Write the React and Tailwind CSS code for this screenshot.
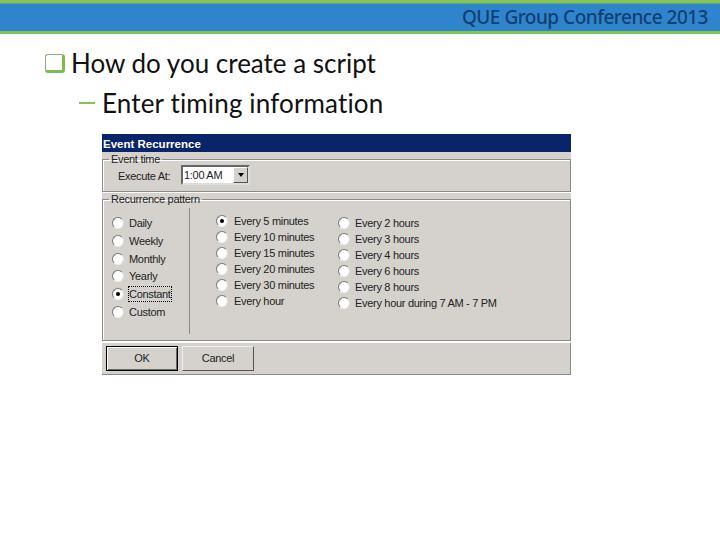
const SANS = "font-['Liberation_Sans',Arial,sans-serif]";
const LABEL = "text-[11px] text-[#222] tracking-[-0.3px] whitespace-nowrap";

const freq = ["Daily", "Weekly", "Monthly", "Yearly", "Constant", "Custom"];
const minutes = ["Every 5 minutes", "Every 10 minutes", "Every 15 minutes", "Every 20 minutes", "Every 30 minutes", "Every hour"];
const hours = ["Every 2 hours", "Every 3 hours", "Every 4 hours", "Every 6 hours", "Every 8 hours", "Every hour during 7 AM - 7 PM"];

function Radio({ checked }) {
  return (
    <span className="w-3 h-3 rounded-full bg-white border border-[#777] border-r-[#ddd] border-b-[#eee] flex items-center justify-center shrink-0">
      {checked && <span className="w-1 h-1 rounded-full bg-black" />}
    </span>
  );
}

function Option({ label, checked, focus, gap }) {
  return (
    <div className={`flex items-center h-[16px] ${gap}`}>
      <Radio checked={checked} />
      <span className={`${LABEL} leading-[14px] ${focus ? "outline outline-1 outline-dotted outline-black" : ""}`}>{label}</span>
    </div>
  );
}

function Dialog() {
  return (
    <div className={`w-[469px] ml-[102px] mt-[11px] bg-[#d5d2cd] ${SANS}`}>
      <div className="h-[18px] bg-[#0a246a] text-white text-[11.5px] font-bold leading-[20px] pl-[1px]">Event Recurrence</div>

      <fieldset className="mt-[1px] h-[39px] border border-[#8a8a8a] shadow-[inset_1px_1px_0_#fff,1px_1px_0_#fff]">
        <legend className={`ml-[6px] px-[2px] leading-[12px] ${LABEL}`}>Event time</legend>
        <div className="flex items-start pl-[15px]">
          <span className={`leading-[22px] w-[63px] ${LABEL}`}>Execute At:</span>
          <div className="w-[69px] h-[20px] bg-white border-2 border-[#666] border-r-[#ddd] border-b-[#ddd] flex justify-between">
            <span className={`leading-[16px] pl-[1px] ${LABEL}`}>1:00 AM</span>
            <span className="w-[15px] h-[16px] bg-[#d5d2cd] border border-[#fff] border-r-[#555] border-b-[#555] flex items-center justify-center">
              <span className="border-x-[3.5px] border-x-transparent border-t-[4px] border-t-black" />
            </span>
          </div>
        </div>
      </fieldset>

      <fieldset className="mt-[1px] h-[148px] border border-[#8a8a8a] shadow-[inset_1px_1px_0_#fff,1px_1px_0_#fff]">
        <legend className={`ml-[6px] px-[2px] leading-[12px] ${LABEL}`}>Recurrence pattern</legend>
        <div className="flex items-start">
          <div className="w-[87px] h-[126px] mt-[3px] pl-[9px] pt-[7px] border-r border-[#8a8a8a] shrink-0">
            <div className="flex flex-col gap-[1.8px]">
              {freq.map((label) => (
                <Option key={label} label={label} gap="gap-[5px]" checked={label === "Constant"} focus={label === "Constant"} />
              ))}
            </div>
          </div>
          <div className="w-[122px] pl-[26px] pt-[8px] flex flex-col shrink-0">
            {minutes.map((m, i) => <Option key={m} label={m} gap="gap-[6px]" checked={i === 0} />)}
          </div>
          <div className="pl-[26px] pt-[10px] flex flex-col">
            {hours.map((h) => <Option key={h} label={h} gap="gap-[5px]" />)}
          </div>
        </div>
      </fieldset>

      <div className="mt-[1px] h-[33px] border-t border-t-white border-b border-b-[#8a8a8a] border-r border-r-[#8a8a8a] flex gap-[4px] pl-[4px] pt-[3px]">
        <button className={`w-[72px] h-[25px] border border-black shadow-[inset_1px_1px_0_#fff,inset_-1px_-1px_0_#666] ${LABEL}`}>OK</button>
        <button className={`w-[72px] h-[25px] border border-[#eee] border-r-[#555] border-b-[#555] ${LABEL}`}>Cancel</button>
      </div>
    </div>
  );
}

export default function App() {
  return (
    <div className="w-[720px] h-[540px] bg-white overflow-hidden">
      <div className="h-[3px] bg-[#84c551]" />
      <div className="h-[1px] bg-[#5fa39a]" />
      <div className="h-[27px] bg-[#2f85cb] flex items-center justify-end pr-[12px]">
        <span className="font-['Noto_Sans',sans-serif] font-medium text-[#123f73] text-[19px] leading-[27px] tracking-[-0.5px] whitespace-nowrap">QUE Group Conference 2013</span>
      </div>
      <div className="h-[3px] bg-[#84c551]" />

      <div className="font-['Lato',sans-serif] text-[#111]">
        <div className="flex items-center h-[40px] mt-[9px] pl-[45px]">
          <span className="w-[20px] h-[19px] bg-white border border-[#8fa88a] border-r-[3px] border-r-[#7fba50] border-b-[3px] border-b-[#7fba50] rounded-[3px] shrink-0" />
          <span className="ml-[6px] text-[26px] leading-[40px] whitespace-nowrap">How do you create a script</span>
        </div>
        <div className="flex items-center h-[40px] pl-[79px]">
          <span className="w-[16px] h-[2px] bg-[#84c551] shrink-0" />
          <span className="ml-[7px] text-[26px] leading-[40px] tracking-[0.15px] whitespace-nowrap">Enter timing information</span>
        </div>
      </div>

      <Dialog />
    </div>
  );
}
